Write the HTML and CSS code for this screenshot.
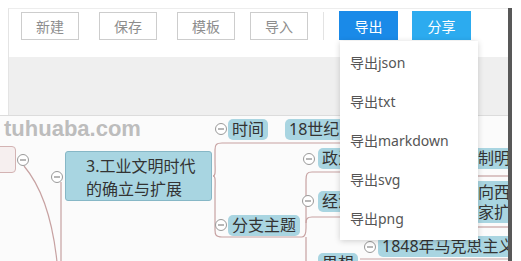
FILE: index.html
```html
<!DOCTYPE html>
<html lang="zh">
<head>
<meta charset="utf-8">
<title>思维导图</title>
<link rel="stylesheet" href="styles.css">
</head>
<body>
<div class="app">
  <div class="window">
    <div class="top">
      <div class="toolbar">
        <button class="btn">新建</button>
        <button class="btn">保存</button>
        <button class="btn">模板</button>
        <button class="btn btn-import">导入</button>
        <span class="sep"></span>
        <div class="menu">
          <button class="btn-export">导出</button>
          <ul class="dropdown">
            <li>导出json</li>
            <li>导出txt</li>
            <li>导出markdown</li>
            <li>导出svg</li>
            <li>导出png</li>
          </ul>
        </div>
        <button class="btn-share">分享</button>
      </div>
      <div class="band"></div>
    </div>
    <div class="canvas">
      <svg class="links" width="508" height="145" viewBox="0 0 508 145">
        <g class="edge">
          <path d="M24 50 C40 69 52 99 57 146"/>
          <path d="M61 66 L61 146"/>
          <path d="M213 60 C216 60 215 54 215 44 L215 34 C215 29 216 27 222 27 L470 27"/>
          <path d="M213 60 C216 60 215 66 215 76 L215 114 C215 119 216 121 222 121 L302 121"/>
          <path d="M302 121 C305 121 306 118 306 112 L306 64 C306 58 307 56 312 56 L470 56"/>
          <path d="M306 107 C306 103 307 101 312 101 L470 101"/>
          <path d="M306 121 L306 146"/>
          <path d="M478 60 L508 60"/>
          <path d="M478 111 L508 111"/>
          <path d="M360 143 L508 143"/>
        </g>
        <g class="toggle"><circle cx="23" cy="44" r="5.5"/><line x1="20" y1="44" x2="26" y2="44"/></g>
        <g class="toggle"><circle cx="57" cy="61" r="5.5"/><line x1="54" y1="61" x2="60" y2="61"/></g>
        <g class="toggle"><circle cx="221" cy="13" r="5.5"/><line x1="218" y1="13" x2="224" y2="13"/></g>
        <g class="toggle"><circle cx="221" cy="109" r="5.5"/><line x1="218" y1="109" x2="224" y2="109"/></g>
        <g class="toggle"><circle cx="309" cy="43" r="5.5"/><line x1="306" y1="43" x2="312" y2="43"/></g>
        <g class="toggle"><circle cx="308" cy="85" r="5.5"/><line x1="305" y1="85" x2="311" y2="85"/></g>
        <g class="toggle"><circle cx="370" cy="131" r="5.5"/><line x1="367" y1="131" x2="373" y2="131"/></g>
      </svg>
      <div class="parent-node"></div>
      <div class="main-node">3.工业文明时代<br>的确立与扩展</div>
      <div class="node n-time">时间</div>
      <div class="node n-century">18世纪中期至20世纪初</div>
      <div class="node n-branch">分支主题</div>
      <div class="node n-politics">政治：资产阶级代议制</div>
      <div class="node n-economy">经济：工业革命</div>
      <div class="node n-right1">制明主</div>
      <div class="node n-right2">向西欧<br>家扩展</div>
      <div class="node n-1848">1848年马克思主义</div>
      <div class="node n-thought">思想</div>
    </div>
  </div>
  <div class="watermark">tuhuaba.com</div>
</div>
</body>
</html>
```

FILE: styles.css
```css
* {
  box-sizing: border-box;
  margin: 0;
  padding: 0;
}

body {
  background: #fff;
  font-family: "Noto Sans", "Noto Sans CJK SC", sans-serif;
}

.app {
  position: relative;
  width: 521px;
  height: 261px;
  overflow: hidden;
  background: #fff;
}

.window {
  margin-top: 8px;
  width: 512px;
  height: 253px;
  border-right: 4px solid #585858;
  display: flex;
  flex-direction: column;
  background: #fff;
}

.top {
  margin-left: 8px;
  border-left: 1px solid #e4e4e4;
  border-top: 1px solid #ededed;
}

.toolbar {
  height: 48px;
  display: flex;
  align-items: flex-start;
  padding: 3px 0 0 12px;
  background: #fff;
}

.btn {
  width: 58px;
  height: 28px;
  border: 1px solid #cdcdcd;
  background: #fff;
  color: #8d8d8d;
  font-family: "Noto Sans CJK SC", sans-serif;
  font-size: 14px;
  margin-right: 20px;
}

.btn-import {
  margin-left: -5px;
  margin-right: 0;
}

.sep {
  width: 1px;
  height: 28px;
  background: #e3e3e3;
  margin: 0 15px;
}

.menu {
  position: relative;
  margin-top: -1px;
}

.btn-export,
.btn-share {
  width: 59px;
  height: 29px;
  border: 0;
  color: #fff;
  font-family: "Noto Sans CJK SC", sans-serif;
  font-size: 14px;
}

.btn-export {
  background: #1a8ae8;
}

.btn-share {
  background: #2cabef;
  margin: -1px 0 0 14px;
}

.dropdown {
  position: absolute;
  left: 1px;
  top: 30px;
  width: 138px;
  padding: 2px 0;
  list-style: none;
  background: #fff;
  box-shadow: 0 1px 6px rgba(0, 0, 0, 0.18);
  z-index: 5;
}

.dropdown li {
  height: 39px;
  line-height: 39px;
  padding-left: 10px;
  font-size: 14px;
  color: #555;
}

.band {
  height: 58px;
  background: #efefef;
}

.canvas {
  flex: 1;
  position: relative;
  overflow: hidden;
  border-top: 1px solid #dcdcdc;
  background: #fbfbfb;
}

.links {
  position: absolute;
  left: 0;
  top: 0;
}

.edge path {
  fill: none;
  stroke: #c7a2a2;
  stroke-width: 1.2;
}

.toggle circle {
  fill: #fff;
  stroke: #999;
  stroke-width: 1;
}

.toggle line {
  stroke: #888;
  stroke-width: 1.2;
}

.parent-node {
  position: absolute;
  left: -6px;
  top: 30px;
  width: 22px;
  height: 27px;
  border: 1px solid #d3b3b3;
  border-radius: 4px;
  background: #f6efef;
}

.main-node {
  position: absolute;
  left: 65px;
  top: 35px;
  width: 147px;
  height: 50px;
  padding: 3px 0 0 20px;
  line-height: 23px;
  font-family: "Noto Sans", "Noto Sans CJK SC", sans-serif;
  font-size: 16px;
  color: #333;
  background: #a8d5e1;
  border: 1px solid #86b7c6;
  border-radius: 3px;
}

.node {
  position: absolute;
  height: 21px;
  line-height: 21px;
  padding: 0 4px;
  font-size: 16px;
  color: #333;
  white-space: nowrap;
  background: #a9d5e1;
  border-radius: 5px;
}

.n-time { left: 228px; top: 3px; }
.n-century { left: 285px; top: 3px; }
.n-branch { left: 228px; top: 99px; }
.n-politics { left: 318px; top: 32px; }
.n-economy { left: 318px; top: 75px; }
.n-right1 { left: 474px; top: 32px; }
.n-right2 { left: 474px; top: 65px; height: 42px; line-height: 20px; padding-top: 1px; }
.n-1848 { left: 378px; top: 120px; }
.n-thought { left: 318px; top: 137px; }

.watermark {
  position: absolute;
  left: 4px;
  top: 118px;
  font-family: "Liberation Sans", Arial, sans-serif;
  font-weight: bold;
  font-size: 22px;
  line-height: 22px;
  color: #bdbdbd;
  z-index: 10;
}
```
